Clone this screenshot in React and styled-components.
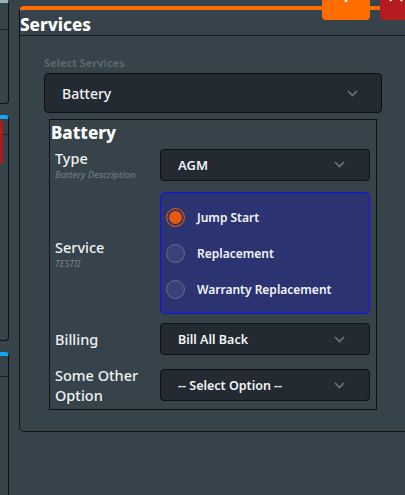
import React from 'react';
import styled, { createGlobalStyle } from 'styled-components';

const GlobalStyle = createGlobalStyle`
  html, body {
    margin: 0;
    padding: 0;
    background: #37434a;
  }
  * {
    box-sizing: border-box;
  }
`

const Page = styled.div`
  position: relative;
  width: 405px;
  height: 495px;
  overflow: hidden;
  display: flex;
  align-items: flex-start;
  gap: 10px;
  background: #37434a;
  font-family: "Noto Sans", "Open Sans", sans-serif;
  color: #eef2f4;
`

const Sidebar = styled.div`
  width: 9px;
  flex-shrink: 0;
  display: flex;
  flex-direction: column;
  gap: 11px;
  margin-top: -1px;
`

const SideCard = styled.div`
  border: 1px solid #111;
  border-left: none;
  border-radius: 0 4px 4px 0;
  border-top: 4px solid ${p => p.$bar};
  height: ${p => p.$height}px;
  position: relative;
  ${p => p.$open && 'border-bottom: none; border-radius: 0 4px 0 0;'}
`

const SideHead = styled.div`
  height: ${p => p.$h}px;
  border-bottom: 1px solid #1a2125;
`

const SideFlag = styled.div`
  position: absolute;
  left: 0;
  top: 1px;
  width: 3px;
  height: 44px;
  background: #b01c1c;
  border-radius: 0 3px 3px 0;
`

const Panel = styled.div`
  margin-top: 6px;
  width: 400px;
  flex-shrink: 0;
  border: 1px solid #111;
  border-top: 4px solid #ff6d00;
  border-radius: 5px 0 0 5px;
  padding-bottom: 21px;
`

const PanelTitle = styled.div`
  font-size: 17px;
  font-weight: 800;
  line-height: 21px;
  color: #fff;
  padding-top: 4px;
  border-bottom: 1px solid #151b1f;
`

const Body = styled.div`
  padding: 20px 0 0 24px;
  width: 362px;
`

const FieldLabel = styled.div`
  font-size: 11px;
  font-weight: 700;
  color: #58676f;
  line-height: 14px;
  margin-bottom: 3px;
`

const SelectBox = styled.div`
  display: flex;
  align-items: center;
  justify-content: space-between;
  height: ${p => p.$h ?? 32}px;
  width: 100%;
  background: #232a31;
  border: 1px solid #0e1114;
  border-radius: 4px;
  padding: 0 ${p => p.$right ?? 24}px 0 17px;
  font-size: ${p => p.$size ?? 12.5}px;
  font-weight: ${p => p.$weight ?? 600};
  color: #f1f4f6;
`

const Value = styled.span`
  white-space: nowrap;
`

const Chevron = () => (
  <svg width="11" height="7" viewBox="0 0 11 7">
    <path d="M1 1 L5.5 5.5 L10 1" fill="none" stroke="#687681" strokeWidth="1.6" />
  </svg>
)

const Group = styled.div`
  margin: 6px 0 0 5px;
  width: 328px;
  border: 1px solid #111;
  padding: 0 5px 4px 1px;
`

const GroupTitle = styled.div`
  font-size: 17px;
  font-weight: 800;
  line-height: 22px;
  color: #fff;
  padding-top: 2px;
  margin-bottom: 4px;
`

const Row = styled.div`
  display: grid;
  grid-template-columns: 105px 210px;
  align-items: center;
  padding-left: 4px;
  margin-bottom: ${p => p.$gap ?? 10}px;
`

const Label = styled.div`
  font-size: 14.5px;
  font-weight: 500;
  line-height: 20px;
  color: #eef2f4;
`

const SubLabel = styled.div`
  font-size: 9.5px;
  font-style: italic;
  line-height: 13px;
  color: #75828a;
`

const RadioGroup = styled.div`
  background: #2b3471;
  border: 1px solid #1010f0;
  border-radius: 5px;
  padding: 6px 5px;
`

const RadioItem = styled.div`
  display: flex;
  align-items: center;
  gap: 12px;
  height: 36px;
  font-size: 12px;
  font-weight: 600;
  color: #f3f5f8;
`

const RadioDot = styled.span`
  width: 19px;
  height: 19px;
  border-radius: 50%;
  flex-shrink: 0;
  border: 1px solid ${p => p.$on ? '#e0560f' : '#646d8a'};
  background: ${p => p.$on ? '#e8590c' : '#37417a'};
  box-shadow: ${p => p.$on ? 'inset 0 0 0 2px #2b3471' : 'none'};
`

const ActionButton = styled.div`
  position: absolute;
  top: 0;
  left: ${p => p.$left}px;
  width: ${p => p.$w}px;
  height: 20px;
  background: ${p => p.$bg};
  border-radius: 0 0 4px 4px;
  overflow: hidden;
  display: flex;
  justify-content: ${p => p.$align || 'center'};
  align-items: flex-end;
`

const HiddenIcon = styled.svg`
  margin-bottom: 18px;
  margin-left: ${p => p.$ml || 0}px;
  flex-shrink: 0;
`

const radios = [
  { label: 'Jump Start', on: true },
  { label: 'Replacement' },
  { label: 'Warranty Replacement' },
]

const App = () => {
  return (
    <Page>
      <GlobalStyle />
      <Sidebar>
        <SideCard $bar="#9bb0bd" $height={105}>
          <SideHead $h={27} />
        </SideCard>
        <SideCard $bar="#1aa3f0" $height={226}>
          <SideHead $h={16} />
          <SideFlag />
        </SideCard>
        <SideCard $bar="#1aa3f0" $height={160} $open>
          <SideHead $h={21} />
        </SideCard>
      </Sidebar>

      <Panel>
        <PanelTitle>Services</PanelTitle>
        <Body>
          <FieldLabel>Select Services</FieldLabel>
          <SelectBox $h={40} $size={14} $weight={500} $right={23}>
            <Value>Battery</Value> <Chevron />
          </SelectBox>

          <Group>
            <GroupTitle>Battery</GroupTitle>
            <Row $gap={11}>
              <div>
                <Label>Type</Label>
                <SubLabel>Battery Description</SubLabel>
              </div>
              <SelectBox $size={13}><Value>AGM</Value> <Chevron /></SelectBox>
            </Row>
            <Row $gap={9}>
              <div>
                <Label>Service</Label>
                <SubLabel>TESTII</SubLabel>
              </div>
              <RadioGroup>
                {radios.map(r => (
                  <RadioItem key={r.label}>
                    <RadioDot $on={r.on} />
                    {r.label}
                  </RadioItem>
                ))}
              </RadioGroup>
            </Row>
            <Row>
              <Label>Billing</Label>
              <SelectBox><Value>Bill All Back</Value> <Chevron /></SelectBox>
            </Row>
            <Row $gap={0}>
              <Label>Some Other<br />Option</Label>
              <SelectBox><Value>-- Select Option --</Value> <Chevron /></SelectBox>
            </Row>
          </Group>
        </Body>
      </Panel>

      <ActionButton $left={322} $w={48} $bg="#ff6d00">
        <HiddenIcon width="14" height="14" viewBox="0 0 14 14">
          <path d="M7 0 V14 M0 7 H14" stroke="#fff" strokeWidth="2.4" />
        </HiddenIcon>
      </ActionButton>
      <ActionButton $left={380} $w={30} $bg="#b51c1f" $align="flex-start">
        <HiddenIcon width="14" height="14" viewBox="0 0 14 14" $ml={9}>
          <path d="M1 1 L13 13 M13 1 L1 13" stroke="#fff" strokeWidth="2" />
        </HiddenIcon>
      </ActionButton>
    </Page>
  );
}

export default App;
